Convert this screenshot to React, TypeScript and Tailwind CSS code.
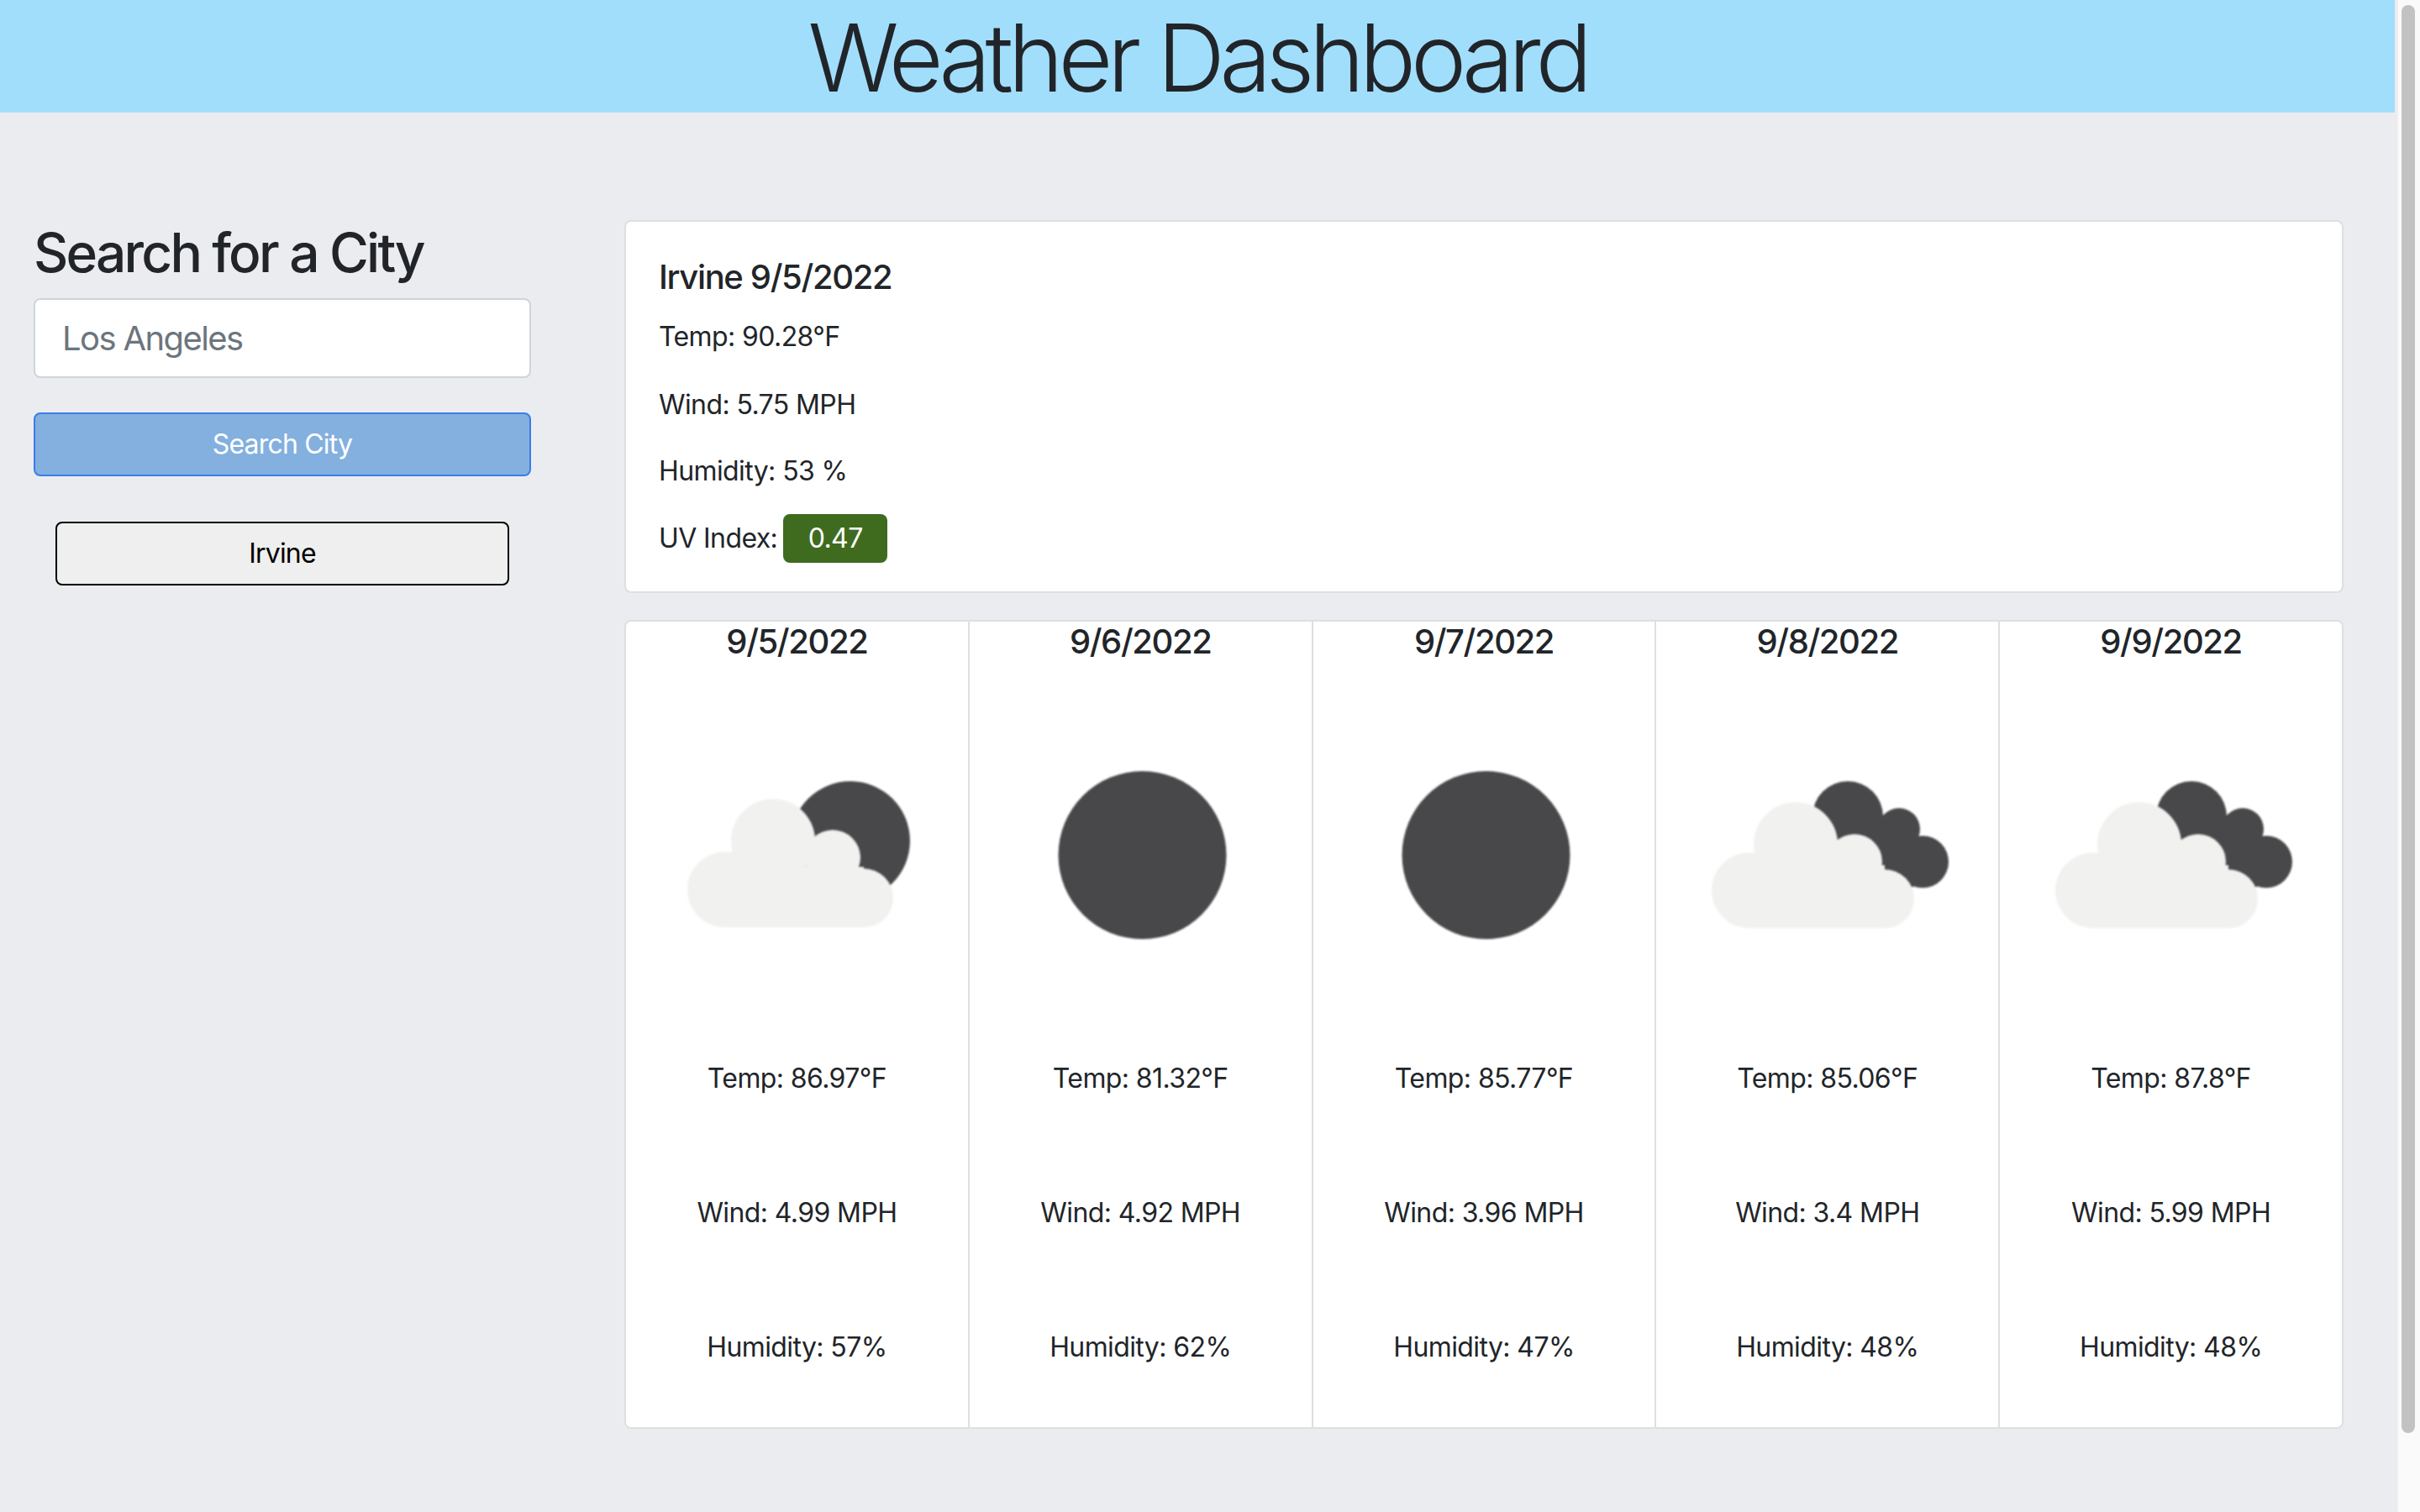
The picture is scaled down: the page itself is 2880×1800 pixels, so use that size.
const days = [
  { date: "9/5/2022", temp: "86.97", wind: "4.99", hum: "57", icon: "few" },
  { date: "9/6/2022", temp: "81.32", wind: "4.92", hum: "62", icon: "clear" },
  { date: "9/7/2022", temp: "85.77", wind: "3.96", hum: "47", icon: "clear" },
  { date: "9/8/2022", temp: "85.06", wind: "3.4", hum: "48", icon: "broken" },
  { date: "9/9/2022", temp: "87.8", wind: "5.99", hum: "48", icon: "broken" },
];

function WeatherIcon({ kind }: { kind: string }) {
  return (
    <svg viewBox="0 0 320 320" className="w-[320px] h-[320px] blur-[0.8px]">
      {kind === "clear" && <circle cx="162.5" cy="158" r="100" fill="#48484a" />}
      {kind === "few" && (
        <>
          <circle cx="224" cy="141" r="71" fill="#48484a" />
          <g fill="#f1f1f0">
            <circle cx="132" cy="141" r="50" />
            <circle cx="75" cy="199" r="45" />
            <circle cx="240" cy="209" r="35" />
            <circle cx="203" cy="161" r="33" />
            <path d="M75 244V172H240V244Z" />
          </g>
        </>
      )}
      {kind === "broken" && (
        <>
          <g fill="#48484a">
            <circle cx="184" cy="112" r="42" />
            <circle cx="245" cy="127" r="25" />
            <circle cx="273" cy="166" r="31" />
            <path d="M184 112L245 127L273 166L262 196L210 190Z" />
          </g>
          <g fill="#f1f1f0">
            <circle cx="122" cy="145" r="50" />
            <circle cx="67" cy="200" r="45" />
            <circle cx="228" cy="210" r="35" />
            <circle cx="192" cy="166" r="33" />
            <path d="M67 245V170H228V245Z" />
          </g>
        </>
      )}
    </svg>
  );
}

export default function App() {
  return (
    <div className="flex w-[2880px] h-[1800px] overflow-hidden bg-[#ebecf0] text-[#212529] font-['Inter','Liberation_Sans',sans-serif] text-[32px] leading-[48px] tracking-[-0.6px]">
      <div className="w-[2852px] shrink-0">
        <header className="w-[2850px] h-[134px] bg-[#a1defc] text-center pt-[2px]">
          <h1 className="text-[112px] leading-[132px] font-light tracking-[-6.3px]">Weather Dashboard</h1>
        </header>
        <main className="flex pt-[128px] pl-[40px]">
          <aside className="w-[592px] shrink-0 flex flex-col">
            <h2 className="text-[64px] leading-[77px] font-medium tracking-[-2.8px] mb-[16px] whitespace-nowrap">Search for a City</h2>
            <input
              placeholder="Los Angeles"
              className="w-full h-[95px] px-[32px] bg-white border-2 border-[#ced4da] rounded-[8px] text-[40px] tracking-[-1.6px] placeholder:text-[#6c757d]"
            />
            <button className="mt-[41px] h-[76px] bg-[#83b0de] border-2 border-[#3b7de8] rounded-[8px] text-white text-[32px] tracking-[-0.8px]">Search City</button>
            <button className="mt-[54px] mx-[26px] h-[76px] bg-[#efefef] border-2 border-black rounded-[8px] text-black text-[32px] tracking-[-0.8px]">Irvine</button>
          </aside>
          <section className="ml-[111px] w-[2046px] shrink-0">
            <div className="h-[444px] bg-white border-2 border-[#dfdfdf] rounded-[8px] px-[39px] pt-[42px]">
              <h3 className="text-[40px] leading-[48px] font-medium tracking-[-1.35px] mb-[23px]">Irvine 9/5/2022</h3>
              <p className="mb-[33px]">Temp: 90.28°F</p>
              <p className="mb-[31px]">Wind: 5.75 MPH</p>
              <p className="mb-[27px]">Humidity: 53 %</p>
              <p className="flex items-center gap-[7px]">
                UV Index:
                <span className="h-[58px] w-[124px] rounded-[8px] bg-[#3f6b1f] text-white flex items-center justify-center">0.47</span>
              </p>
            </div>
            <div className="mt-[32px] h-[963px] flex bg-white border-2 border-[#dfdfdf] rounded-[8px]">
              {days.map((d, i) => (
                <div key={d.date} className={`flex-1 flex flex-col items-center text-center ${i > 0 ? "border-l-2 border-[#dfdfdf]" : ""}`}>
                  <div className="text-[40px] leading-[48px] font-medium tracking-[-1.4px]">{d.date}</div>
                  <div className="mt-[72px] h-[320px]"><WeatherIcon kind={d.icon} /></div>
                  <p className="mt-[80px] h-[160px]">Temp: {d.temp}°F</p>
                  <p className="h-[160px]">Wind: {d.wind} MPH</p>
                  <p>Humidity: {d.hum}%</p>
                </div>
              ))}
            </div>
          </section>
        </main>
      </div>
      <div className="w-[28px] shrink-0 h-full bg-[#fafafa] border-l-2 border-[#eeeeee] pl-[4px] pt-[6px]">
        <div className="w-[16px] h-[1700px] bg-[#c2c2c2] rounded-full" />
      </div>
    </div>
  );
}
